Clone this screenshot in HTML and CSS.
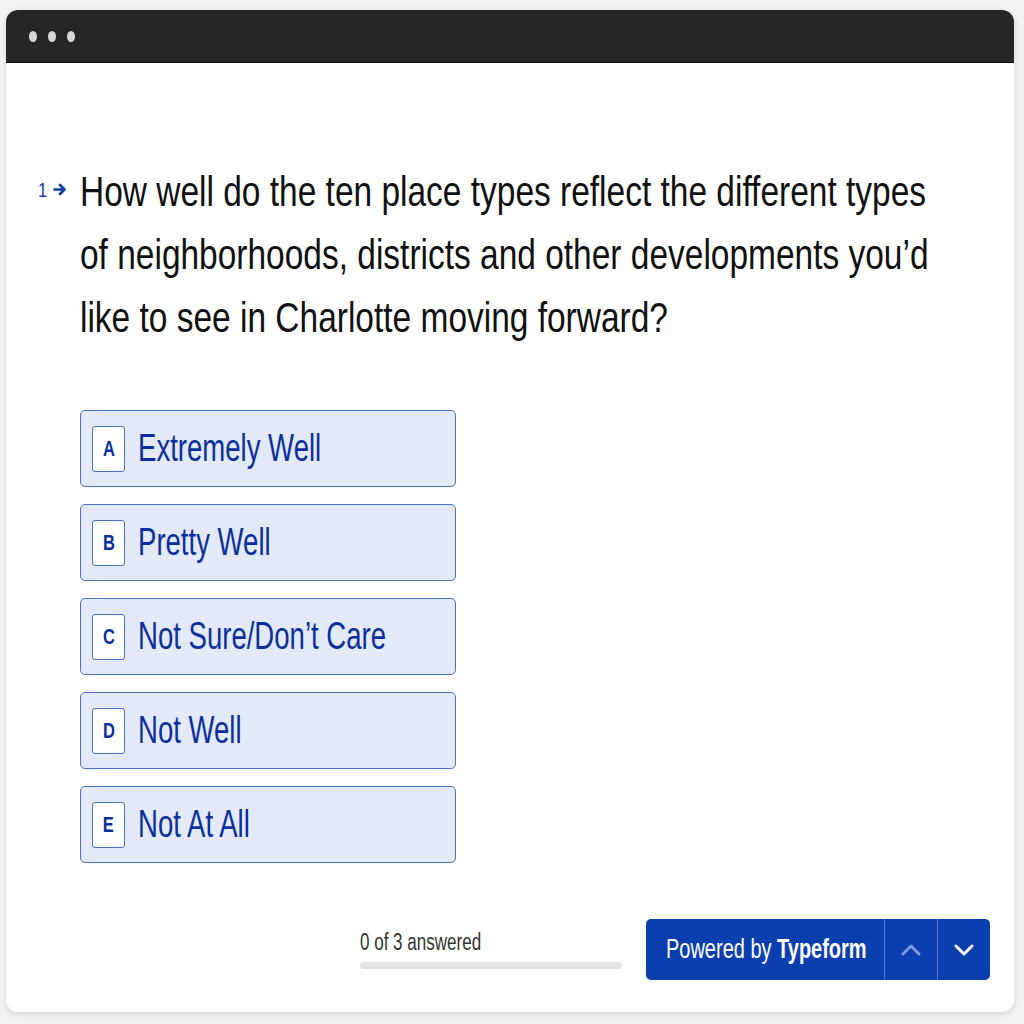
FILE: index.html
```html
<!DOCTYPE html>
<html lang="en">
<head>
<meta charset="utf-8">
<title>Typeform question</title>
<link rel="stylesheet" href="styles.css">
</head>
<body>
<div class="window">
  <div class="titlebar">
    <span class="dot"></span><span class="dot"></span><span class="dot"></span>
  </div>
  <div class="content">
    <div class="question-row">
      <div class="qnum">
        <span class="num">1</span>
        <svg class="arrow" width="14" height="13" viewBox="0 0 14 13"><path d="M1.5 6.5H11.5M7 2L11.5 6.5L7 11" fill="none" stroke="#0b3aa8" stroke-width="2.6" stroke-linecap="round" stroke-linejoin="round"/></svg>
      </div>
      <div class="question"><span class="qtext">How well do the ten place types reflect the different types<br>of neighborhoods, districts and other developments you’d<br>like to see in Charlotte moving forward?</span></div>
    </div>
    <div class="choices">
      <div class="choice"><span class="key"><span class="sq">A</span></span><span class="label">Extremely Well</span></div>
      <div class="choice"><span class="key"><span class="sq">B</span></span><span class="label">Pretty Well</span></div>
      <div class="choice"><span class="key"><span class="sq">C</span></span><span class="label">Not Sure/Don’t Care</span></div>
      <div class="choice"><span class="key"><span class="sq">D</span></span><span class="label">Not Well</span></div>
      <div class="choice"><span class="key"><span class="sq">E</span></span><span class="label">Not At All</span></div>
    </div>
    <div class="footer">
      <div class="progress">
        <span class="ptext">0 of 3 answered</span>
        <div class="bar"></div>
      </div>
      <div class="nav">
        <div class="powered"><span class="ptxt">Powered by <b>Typeform</b></span></div>
        <div class="navbtn up"><svg width="20" height="12" viewBox="0 0 20 12"><path d="M2 10L10 2L18 10" fill="none" stroke="#7d9ade" stroke-width="3" stroke-linecap="round" stroke-linejoin="round"/></svg></div>
        <div class="navbtn down"><svg width="20" height="12" viewBox="0 0 20 12"><path d="M2 2L10 10L18 2" fill="none" stroke="#ffffff" stroke-width="3" stroke-linecap="round" stroke-linejoin="round"/></svg></div>
      </div>
    </div>
  </div>
</div>
</body>
</html>
```

FILE: styles.css
```css
html, body {
  margin: 0;
  padding: 0;
}
body {
  background: #f3f3f3;
  font-family: "Liberation Sans", Arial, sans-serif;
  padding: 10px 10px 0 6px;
  height: 1024px;
  box-sizing: border-box;
}
.window {
  width: 1008px;
  height: 1002px;
  background: #ffffff;
  border-radius: 12px;
  overflow: hidden;
  box-shadow: 0 2px 6px rgba(0,0,0,0.12);
  display: flex;
  flex-direction: column;
}
.titlebar {
  height: 53px;
  flex: 0 0 53px;
  background: #262628;
  border-bottom: 1px solid #111;
  box-sizing: border-box;
  display: flex;
  align-items: center;
  gap: 11px;
  padding-left: 23px;
}
.dot {
  width: 8px;
  height: 11px;
  border-radius: 50%;
  background: #d6d6d6;
}
.content {
  flex: 1;
  padding: 97px 24px 0 32px;
  display: flex;
  flex-direction: column;
}
.question-row {
  display: flex;
  align-items: flex-start;
}
.qnum {
  width: 42px;
  flex: 0 0 42px;
  height: 63px;
  display: flex;
  align-items: center;
  gap: 7px;
  color: #0b3aa8;
  box-sizing: border-box;
  margin-top: -2px;
}
.num {
  display: inline-block;
  font-size: 21px;
  transform: scaleX(0.78);
  transform-origin: left center;
  width: 8px;
}
.arrow {
  display: block;
}
.question {
  width: 880px;
}
.qtext {
  display: block;
  width: 1100px;
  white-space: nowrap;
  font-size: 42px;
  line-height: 63px;
  color: #111;
  transform: scaleX(0.797);
  transform-origin: left top;
}
.choices {
  margin-top: 61px;
  margin-left: 42px;
  display: flex;
  flex-direction: column;
  gap: 17px;
}
.choice {
  width: 376px;
  height: 77px;
  box-sizing: border-box;
  background: #e3e9f6;
  border: 1px solid #4a6fc6;
  border-radius: 5px;
  display: flex;
  align-items: center;
  padding-left: 11px;
  gap: 13px;
}
.key {
  width: 33px;
  height: 46px;
  flex: 0 0 33px;
  box-sizing: border-box;
  background: #ffffff;
  border: 1px solid #4a6fc6;
  border-radius: 3px;
  display: flex;
  align-items: center;
  justify-content: center;
}
.sq {
  display: inline-block;
  font-size: 22px;
  font-weight: bold;
  color: #0c2f9e;
  transform: scaleX(0.75);
}
.label {
  display: inline-block;
  font-size: 38px;
  color: #0c2f9e;
  white-space: nowrap;
  flex-shrink: 0;
  transform: scaleX(0.725);
  transform-origin: left center;
}
.footer {
  margin-top: 56px;
  display: flex;
  justify-content: flex-end;
  align-items: center;
  gap: 24px;
}
.progress {
  width: 262px;
  display: flex;
  flex-direction: column;
  gap: 7px;
  padding-bottom: 2px;
}
.ptext {
  display: block;
  font-size: 23px;
  line-height: 26px;
  color: #333;
  white-space: nowrap;
  transform: scaleX(0.74);
  transform-origin: left center;
}
.bar {
  height: 7px;
  border-radius: 4px;
  background: #e4e4e4;
}
.nav {
  height: 61px;
  width: 344px;
  background: #0b3eae;
  border-radius: 5px;
  display: flex;
  overflow: hidden;
}
.powered {
  width: 239px;
  flex: 0 0 239px;
  display: flex;
  align-items: center;
  padding-left: 20px;
  box-sizing: border-box;
  border-right: 1px solid rgba(255,255,255,0.3);
}
.ptxt {
  display: inline-block;
  white-space: nowrap;
  font-size: 27px;
  color: #ffffff;
  transform: scaleX(0.74);
  transform-origin: left center;
}
.navbtn {
  width: 52px;
  display: flex;
  align-items: center;
  justify-content: center;
}
.navbtn.up {
  border-right: 1px solid rgba(255,255,255,0.3);
}
.navbtn svg {
  display: block;
}
```
